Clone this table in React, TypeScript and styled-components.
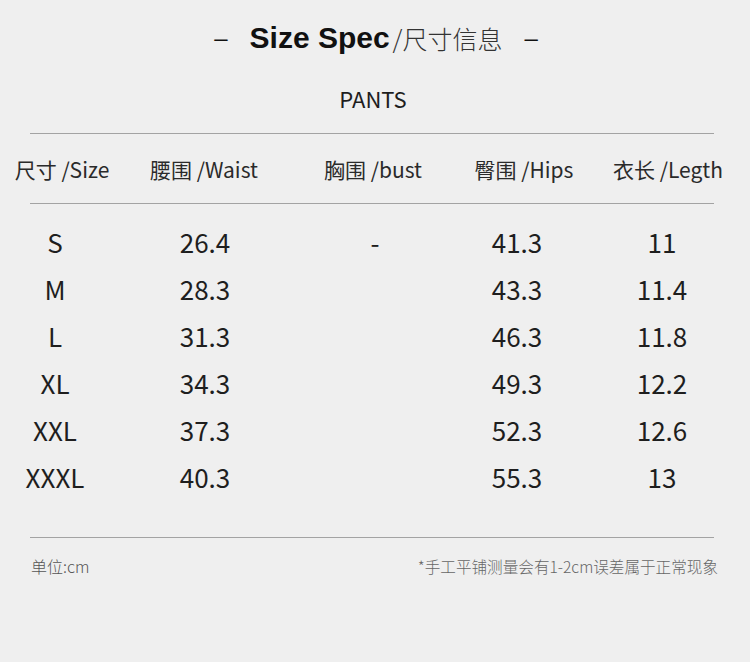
import React from "react";
import styled, { createGlobalStyle } from "styled-components";

const Global = createGlobalStyle`
  html, body { margin: 0; padding: 0; background: #efefef; }
  body { width: 750px; height: 662px; overflow: hidden; }
`;

const CJK = `"Noto Sans CJK SC", "Noto Sans", sans-serif`;

const Page = styled.div`
  width: 750px;
  height: 662px;
  background: #efefef;
  color: #1e1e1e;
  font-family: ${CJK};
  padding-top: 18px;
  box-sizing: border-box;
`;

const TitleRow = styled.div`
  display: flex;
  justify-content: center;
  align-items: center;
  height: 40px;
  padding-left: 2px;
`;

const Dash = styled.span<{ $gap: number }>`
  font-family: "Liberation Sans", Arial, sans-serif;
  font-size: 24px;
  font-weight: 400;
  color: #111;
  margin: 0 ${(p) => p.$gap}px;
`;

const TitleEn = styled.span`
  font-family: "Liberation Sans", Arial, sans-serif;
  font-weight: 700;
  font-size: 30px;
  color: #111;
`;

const TitleCn = styled.span`
  font-family: ${CJK};
  font-weight: 300;
  font-size: 25px;
  color: #333;
  margin-left: 3px;
`;

const Category = styled.div`
  text-align: center;
  font-size: 22px;
  font-weight: 400;
  margin-top: 21px;
  margin-bottom: 16px;
  line-height: 38px;
  color: #1e1e1e;
  padding-right: 4px;
`;

const Rule = styled.div`
  margin-left: 30px;
  width: 684px;
  height: 1px;
  background: #a3a3a3;
`;

const Grid = styled.div<{ $cols: string; $h: number; $size: number }>`
  display: grid;
  grid-template-columns: ${(p) => p.$cols};
  height: ${(p) => p.$h}px;
  align-items: center;
  font-size: ${(p) => p.$size}px;
`;

const Cell = styled.div`
  text-align: center;
  white-space: nowrap;
`;

const HeaderGrid = styled(Grid)`
  color: #2a2a2a;
`;

const Body = styled.div`
  padding-top: 14px;
  height: 333px;
  box-sizing: border-box;
`;

const Footer = styled.div`
  display: flex;
  justify-content: space-between;
  align-items: center;
  padding: 0 32px 0 31px;
  height: 56px;
  font-weight: 300;
  color: #555;
`;

const FootLeft = styled.span`
  font-size: 16px;
`;

const FootRight = styled.span`
  font-size: 15.6px;
  color: #666;
`;

const headers = ["尺寸 /Size", "腰围 /Waist", "胸围 /bust", "臀围 /Hips", "衣长 /Legth"];
const rows: string[][] = [
  ["S", "26.4", "-", "41.3", "11"],
  ["M", "28.3", "", "43.3", "11.4"],
  ["L", "31.3", "", "46.3", "11.8"],
  ["XL", "34.3", "", "49.3", "12.2"],
  ["XXL", "37.3", "", "52.3", "12.6"],
  ["XXXL", "40.3", "", "55.3", "13"],
];

export default function App() {
  return (
    <Page>
      <Global />
      <TitleRow>
        <Dash $gap={22}>–</Dash>
        <TitleEn>Size Spec</TitleEn>
        <TitleCn>/尺寸信息</TitleCn>
        <Dash $gap={22}>–</Dash>
      </TitleRow>
      <Category>PANTS</Category>
      <Rule />
      <HeaderGrid $cols="124px 160px 178px 124px 164px" $h={69} $size={21}>
        {headers.map((h) => (
          <Cell key={h}>{h}</Cell>
        ))}
      </HeaderGrid>
      <Rule />
      <Body>
        {rows.map((r) => (
          <Grid key={r[0]} $cols="110px 190px 150px 134px 156px" $h={47} $size={26}>
            {r.map((v, i) => (
              <Cell key={i}>{v}</Cell>
            ))}
          </Grid>
        ))}
      </Body>
      <Rule />
      <Footer>
        <FootLeft>单位:cm</FootLeft>
        <FootRight>*手工平铺测量会有1-2cm误差属于正常现象</FootRight>
      </Footer>
    </Page>
  );
}
